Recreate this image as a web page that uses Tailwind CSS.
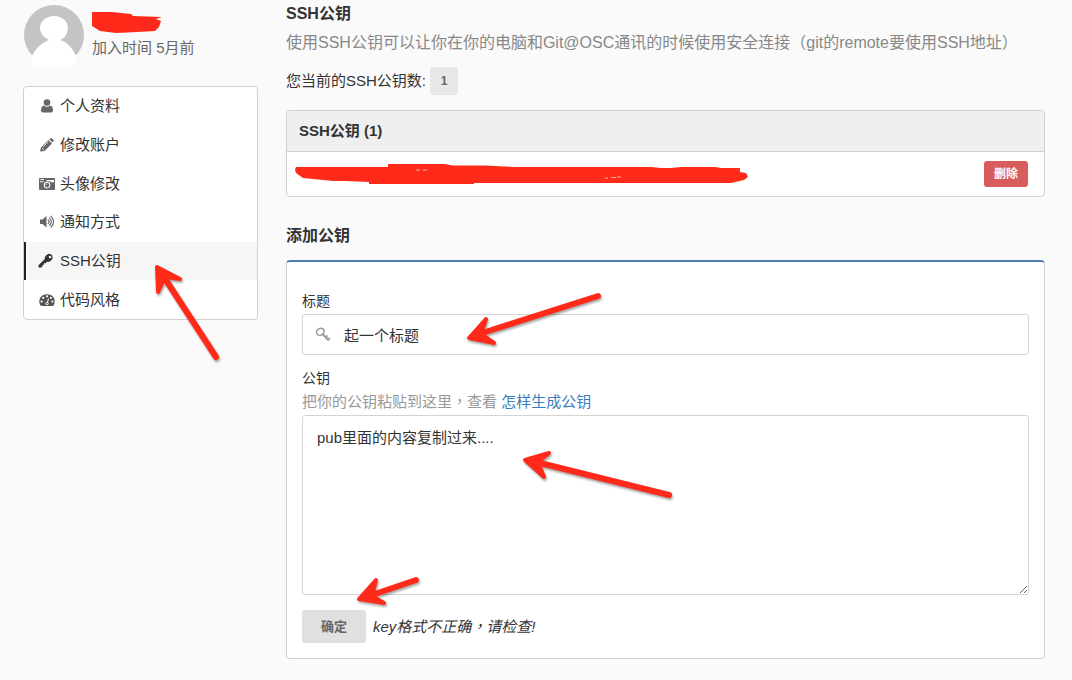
<!DOCTYPE html>
<html lang="zh-CN">
<head>
  <meta charset="UTF-8" />
  <meta name="viewport" content="width=device-width, initial-scale=1" />
  <title>SSH公钥</title>

  <!-- Tailwind CSS -->
  <script src="https://cdn.jsdelivr.net/npm/@tailwindcss/browser@4"></script>
</head>
<body class="relative min-h-screen bg-[#fafafa] font-['Liberation_Sans','Noto_Sans_CJK_SC',sans-serif] text-[15px] leading-6 text-[#333]">

  <div class="flex gap-7 pl-[23px] pr-[27px]">

    <!-- Sidebar -->
    <aside class="w-[235px] shrink-0 pt-[5px]">
      <div class="flex h-[60px] gap-2 pl-px">
        <svg class="size-[60px] shrink-0" viewBox="0 0 60 60" role="img" aria-label="头像">
          <circle cx="30" cy="30" r="30" fill="#c4c4c4" />
          <path d="M8 51C13 41 20 37 25 35C19 32 16 28 16 22C17 15 23 11 30 11C38 11 44 16 44 24C43 29 41 33 36 35C43 37 48 42 52 51L52 60H8Z" fill="#fff" />
        </svg>
        <div class="pt-[6px]">
          <svg class="block h-[22px] w-[71px]" viewBox="0 0 71 22" aria-hidden="true">
            <path d="M0 1L20 1L39 3L41 5L70 6L64 8L69 10L67 16L63 20L45 21L24 22L8 20L0 15Z" fill="#ff2a1a" />
          </svg>
          <p class="mt-[3px] text-[#666]">加入时间 5月前</p>
        </div>
      </div>

      <nav class="mt-[21px] grid h-[234px] grid-rows-6 overflow-hidden rounded border border-[#d0d0d0] bg-white">
        <a href="#" class="flex items-center gap-1 border-l-2 border-transparent pl-3">
          <svg class="size-[18px] text-[#666]" viewBox="0 0 18 18" fill="currentColor"><circle cx="9" cy="5.500" r="3.300" /><path d="M6 8.500Q9 11 12 8.500Q15 9 15 13.500Q15 15.500 13 15.500H5Q3 15.500 3 13.500Q3 9 6 8.500Z" /></svg>
          个人资料
        </a>
        <a href="#" class="flex items-center gap-1 border-l-2 border-transparent pl-3">
          <svg class="size-[18px] text-[#666]" viewBox="0 0 18 18" fill="currentColor"><path d="M2 15.500L3 11.500L10.500 4L14 7.500L6.500 15L2 15.500Z" /><path d="M11.300 3.200L12.500 2.200Q13.200 1.700 14 2.500L15.300 3.800Q16 4.600 15.400 5.300L14.600 6.500Z" /><path d="M4 12L5.800 13.800M5.200 10.800L10.500 5.500" stroke="#fff" stroke-width=".8" fill="none" /></svg>
          修改账户
        </a>
        <a href="#" class="flex items-center gap-1 border-l-2 border-transparent pl-3">
          <svg class="size-[18px] text-[#666]" viewBox="0 0 18 18" fill="currentColor"><path fill-rule="evenodd" d="M2 3H16Q17 3 17 4V14Q17 15 16 15H2Q1 15 1 14V4Q1 3 2 3ZM2.500 4V5H6V4ZM2 6.300V7.200H5L6 6.300ZM12 6.300L13 7.200H16V5H9L8 6.300ZM9 6.800A3.300 3.300 0 1 0 9 13.400A3.300 3.300 0 1 0 9 6.800Z" /><circle cx="9" cy="10.100" r="2.300" /><path d="M7.800 10.100Q7.900 8.900 9.100 8.900" stroke="#fff" stroke-width=".8" fill="none" /></svg>
          头像修改
        </a>
        <a href="#" class="flex items-center gap-1 border-l-2 border-transparent pl-3">
          <svg class="size-[18px] text-[#666]" viewBox="0 0 18 18" fill="currentColor"><path d="M2 6.500H4.500L8.500 3V14.500L4.500 11H2Z" /><path d="M10.200 7Q12 8.800 10.200 10.500M11.500 5Q15 8.800 11.500 12.500M13 3.200Q18 8.800 13 14.300" fill="none" stroke="currentColor" stroke-width="1.100" stroke-linecap="round" /></svg>
          通知方式
        </a>
        <a href="#" class="flex items-center gap-1 border-l-2 border-[#222] bg-[#f6f6f6] pl-3" aria-current="page">
          <svg class="size-[18px] text-[#333]" viewBox="0 0 18 18" fill="currentColor"><path fill-rule="evenodd" d="M8 3.500Q10.500 1 13 2.300Q15.500 4 14 7.500Q12 10.500 9 9.800L7.500 11.300H6V12.700H4.500V14.200L3.500 15.500H.5V13.200L6.800 7Q6.500 5 8 3.500ZM12 3.700A1.300 1.300 0 1 0 12 6.300A1.300 1.300 0 1 0 12 3.700Z" /></svg>
          SSH公钥
        </a>
        <a href="#" class="flex items-center gap-1 border-l-2 border-transparent pl-3">
          <svg class="size-[18px] text-[#555]" viewBox="0 0 18 18" fill="currentColor"><path d="M3 15Q1 12.500 1.200 10Q2 3.500 9 3.300Q16 3.500 16.800 10Q17 12.500 15 15Z" /><g fill="#fff"><circle cx="3.600" cy="10.500" r="1.100" /><circle cx="5.200" cy="6.800" r="1.100" /><circle cx="9" cy="5.300" r="1.100" /><circle cx="12.900" cy="6.800" r="1.100" /><circle cx="14.400" cy="10.500" r="1.100" /></g><path d="M10.500 7.500L9.300 12" stroke="#fff" stroke-width="1" /><circle cx="9" cy="12.500" r="1.600" fill="#fff" /><circle cx="9" cy="12.500" r=".8" /></svg>
          代码风格
        </a>
      </nav>
    </aside>

    <!-- Content -->
    <main class="min-w-0 flex-1">
      <h1 class="pt-[2px] text-base font-bold">SSH公钥</h1>
      <p class="mt-[5px] text-base text-[#888]">使用SSH公钥可以让你在你的电脑和Git@OSC通讯的时候使用安全连接（git的remote要使用SSH地址）</p>
      <p class="mt-3 flex h-7 items-center gap-1">
        您当前的SSH公钥数:
        <span class="flex size-7 items-center justify-center rounded-[3px] bg-[#e8e8e8] text-xs font-bold text-[#666]">1</span>
      </p>

      <!-- Key list -->
      <section class="mt-[15px] overflow-hidden rounded border border-[#d0d0d0] bg-white">
        <h2 class="h-10 bg-[#efefef] px-3 py-2 font-bold">SSH公钥 (1)</h2>
        <div class="flex items-center justify-between border-t border-[#d0d0d0] py-[9px] pl-2 pr-4">
          <svg class="h-5 w-[453px]" viewBox="0 0 453 20" aria-hidden="true">
            <path d="M1 3H93V0H149L158 1.500H190L220 3H356L366 4H376L386 3L420 3L426 4H445V8L451 9L453 13L449 16L436 19H179V20H74V18L50 17L38 17L8 14L1 9L0 6Z" fill="#ff2a1a" />
            <path d="M121 6H125M128 6H132M310 14H313M316 13.500H321M322 13H326" stroke="#ffb0a5" stroke-width="1" />
          </svg>
          <button type="button" class="h-[26px] w-11 rounded-[3px] bg-[#d95c5c] text-xs font-bold text-white">删除</button>
        </div>
      </section>

      <!-- New key -->
      <h2 class="mt-[27px] text-base font-bold">添加公钥</h2>
      <form class="mt-3 rounded border border-t-2 border-[#d0d0d0] border-t-[#4f81b5] bg-white p-[15px] pt-[29px]">
        <label for="title" class="block text-sm leading-5">标题</label>
        <div class="relative mt-[3px]">
          <svg class="absolute left-3 top-3 size-[18px] text-[#999]" viewBox="0 0 18 18" fill="none" stroke="currentColor"><ellipse cx="6.300" cy="5.800" rx="4" ry="3.200" transform="rotate(-35 6.300 5.800)" stroke-width="1.600" /><path d="M8.500 8L14.800 14.500" stroke-width="2" /><path d="M11.500 11.500L13.700 9.500M13.800 13.800L16 11.800" stroke-width="1.600" /></svg>
          <input type="text" id="title" value="起一个标题" class="block h-[41px] w-full rounded-[3px] border border-[#d4d4d4] bg-white pl-[41px] pr-4 outline-none" />
        </div>

        <label for="key" class="mt-[13px] block text-sm leading-5">公钥</label>
        <p class="mt-px text-[#999]">把你的公钥粘贴到这里<span class="font-['Noto_Sans_CJK_TC',sans-serif]" lang="zh-TW">，</span>查看 <a href="#" class="text-[#3b7cba]">怎样生成公钥</a></p>
        <textarea id="key" class="mt-px block h-[180px] w-full resize rounded-[3px] border border-[#d4d4d4] bg-white px-[14px] py-[10px] outline-none">pub里面的内容复制过来....</textarea>

        <div class="mt-[15px] flex items-center gap-[7px]">
          <button type="submit" class="h-[33px] w-16 rounded-[3px] bg-[#e0e0e0] text-[13px] font-bold text-[#666]">确定</button>
          <em>key格式不正确<span class="font-['Noto_Sans_CJK_TC',sans-serif]" lang="zh-TW">，</span>请检查!</em>
        </div>
      </form>
    </main>
  </div>

  <!-- Hint arrows -->
  <svg class="pointer-events-none absolute left-0 top-0 h-[680px] w-[1072px] drop-shadow-[1px_2px_1px_rgba(0,0,0,0.35)]" viewBox="0 0 1072 680" aria-hidden="true">
    <g fill="none" stroke="#ff2a1a" stroke-width="6" stroke-linecap="round" stroke-linejoin="round">
      <path d="M216 357L162 274" />
      <path d="M598 296L476 335" />
      <path d="M669 495L532 461" />
      <path d="M416 580L366 597" />
    </g>
    <g fill="#ff2a1a" stroke="#ff2a1a" stroke-width="4" stroke-linecap="round" stroke-linejoin="round">
      <path d="M157 267L180 279L165 277L158 292Z" />
      <path d="M469 338L486 319L481 334L494 343Z" />
      <path d="M525 460L549 453L538 462L544 477Z" />
      <path d="M359 599L376 580L372 596L384 603Z" />
    </g>
  </svg>
</body>
</html>
